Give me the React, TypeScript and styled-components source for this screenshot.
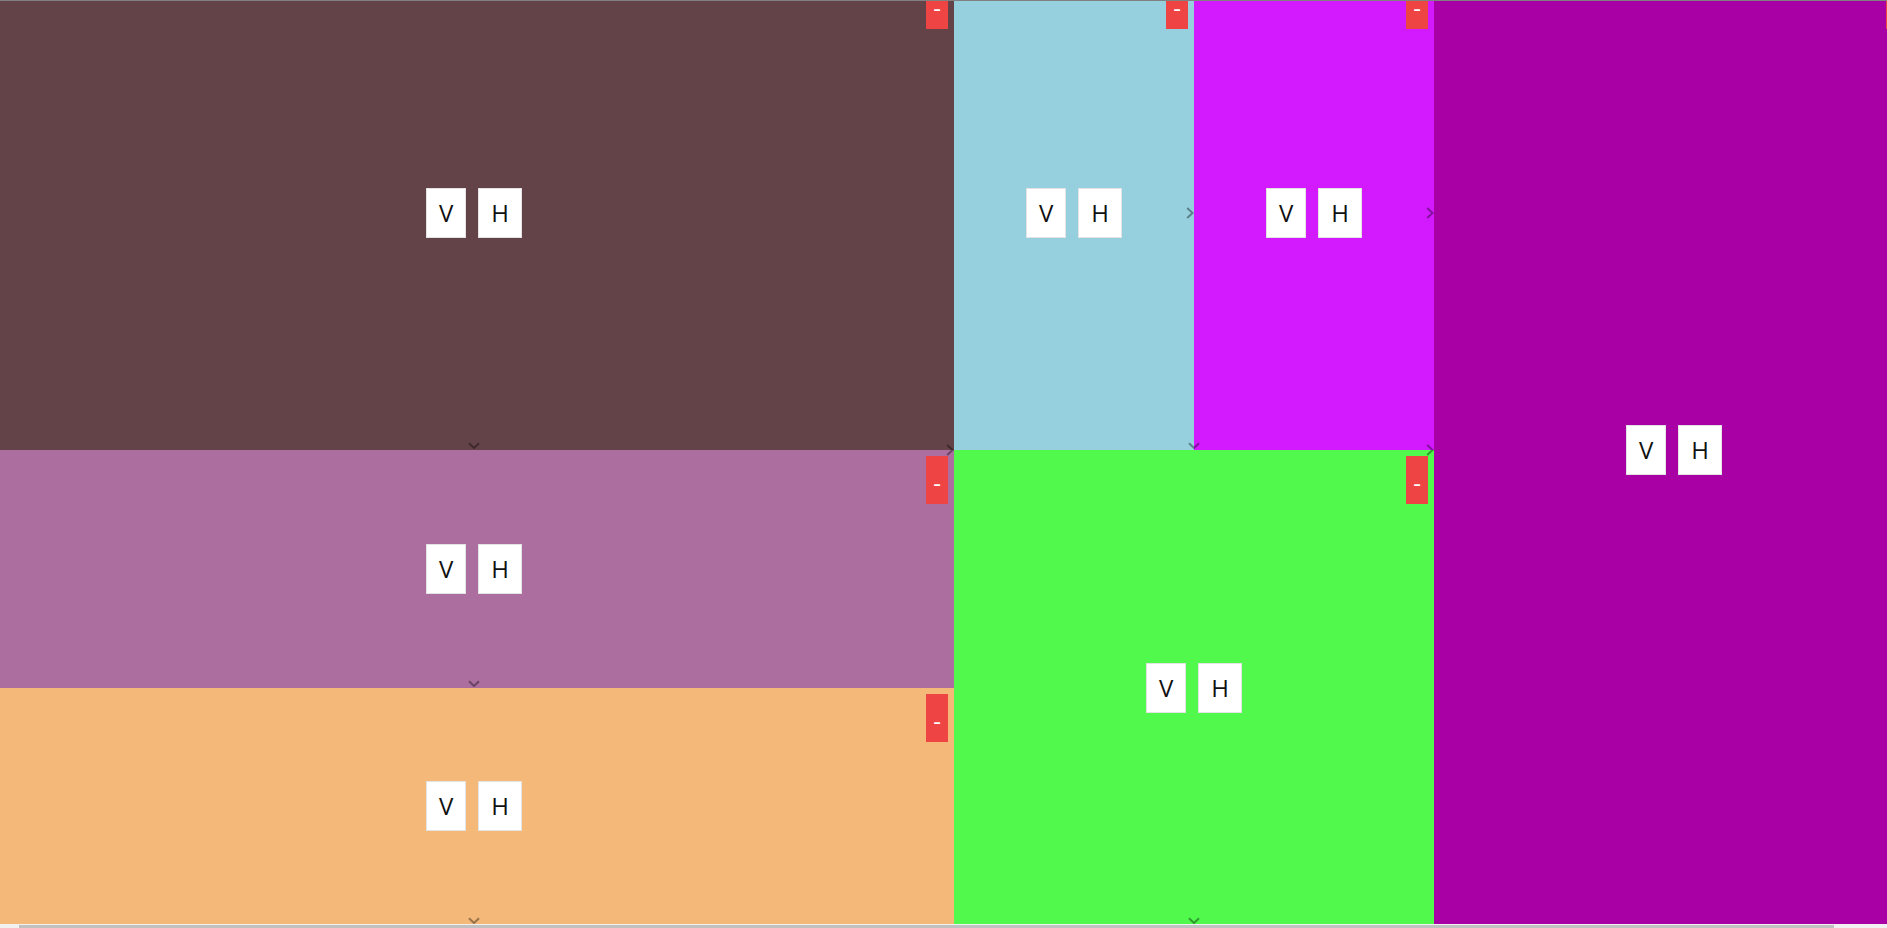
import React, { useLayoutEffect, useRef } from "react";
import styled, { createGlobalStyle } from "styled-components";

const GlobalStyle = createGlobalStyle`
  html, body {
    margin: 0;
    padding: 0;
    overflow: hidden;
    background: #ffffff;
    font-family: "Open Sans", "Noto Sans", sans-serif;
  }
`;

type Dir = "row" | "column";

interface PaneNode {
  id: string;
  size: number;
  dir?: Dir;
  color?: string;
  children?: PaneNode[];
}

const tree: PaneNode = {
  id: "root",
  size: 100,
  dir: "row",
  children: [
    {
      id: "left",
      size: 50,
      dir: "column",
      children: [
        { id: "a", size: 50, color: "#644348" },
        { id: "b", size: 25, color: "#ab6e9e" },
        { id: "c", size: 25, color: "#f4b878" },
      ],
    },
    {
      id: "middle",
      size: 25,
      dir: "column",
      children: [
        {
          id: "mtop",
          size: 50,
          dir: "row",
          children: [
            { id: "d", size: 50, color: "#96d0df" },
            { id: "e", size: 50, color: "#d31aff" },
          ],
        },
        { id: "f", size: 50, color: "#50f94c" },
      ],
    },
    { id: "g", size: 25, color: "#a900a6" },
  ],
};

const Page = styled.div`
  display: flex;
  flex-direction: column;
  width: 100vw;
  height: 928px;
  border-top: 1px solid #808080;
  box-sizing: border-box;
`;

const Viewport = styled.div`
  flex: 0 0 923px;
  overflow: hidden;
`;

const ScrollTrack = styled.div`
  flex: 0 0 4px;
  display: flex;
  background: #f1f1f1;
  padding-left: 19px;
`;

const ScrollThumb = styled.div`
  width: 1815px;
  height: 3px;
  margin-top: 1px;
  background: #c1c1c1;
`;

const Canvas = styled.div`
  width: 1920px;
  height: 950px;
  display: flex;
`;

const Split = styled.div<{ $dir: Dir; $size: number }>`
  position: relative;
  display: flex;
  flex-direction: ${(p) => p.$dir};
  flex: 0 0 ${(p) => p.$size}%;
  min-width: 0;
  min-height: 0;
`;

const Leaf = styled.div<{ $bg: string; $size: number }>`
  position: relative;
  flex: 0 0 ${(p) => p.$size}%;
  min-width: 0;
  min-height: 0;
  background: ${(p) => p.$bg};
  display: flex;
  align-items: center;
  justify-content: center;
  gap: 12px;
`;

const SplitButton = styled.button`
  font-family: "Open Sans", "Noto Sans", sans-serif;
  font-size: 24px;
  line-height: 32px;
  padding: 8px 12px;
  margin: 0;
  color: #111111;
  background: #ffffff;
  border: 1px solid #e3e3e3;
  border-radius: 0;
  cursor: pointer;
`;

const RemoveButton = styled.button`
  position: absolute;
  top: 6px;
  right: 6px;
  width: 22px;
  height: 48px;
  padding: 6px 0 0;
  margin: 0;
  border: none;
  border-radius: 0;
  background: #ef4444;
  color: #ffffff;
  font-family: "Open Sans", "Noto Sans", sans-serif;
  font-size: 24px;
  line-height: 32px;
  display: flex;
  align-items: center;
  justify-content: center;
  cursor: pointer;
  z-index: 2;
`;

const RightHandle = styled.svg`
  position: absolute;
  right: 0;
  top: 50%;
  transform: translateY(-50%);
  width: 8px;
  height: 12px;
  z-index: 1;
`;

const DownHandle = styled.svg`
  position: absolute;
  bottom: 1px;
  left: 50%;
  transform: translateX(-50%);
  width: 12px;
  height: 7px;
  z-index: 1;
`;

const handleStroke = "rgba(0,0,0,0.38)";

function ChevronRight() {
  return (
    <RightHandle viewBox="0 0 8 12">
      <polyline
        points="1.2,1 6.6,6 1.2,11"
        fill="none"
        stroke={handleStroke}
        strokeWidth={2}
      />
    </RightHandle>
  );
}

function ChevronDown() {
  return (
    <DownHandle viewBox="0 0 12 7">
      <polyline
        points="1,1.2 6,6 11,1.2"
        fill="none"
        stroke={handleStroke}
        strokeWidth={2}
      />
    </DownHandle>
  );
}

function Pane({ node, parentDir }: { node: PaneNode; parentDir?: Dir }) {
  const overlays = (
    <>
      {parentDir === "row" && <ChevronRight />}
      {parentDir === "column" && <ChevronDown />}
      {parentDir && <RemoveButton>-</RemoveButton>}
    </>
  );

  if (node.children && node.dir) {
    return (
      <Split $dir={node.dir} $size={node.size}>
        {node.children.map((c) => (
          <Pane key={c.id} node={c} parentDir={node.dir} />
        ))}
        {overlays}
      </Split>
    );
  }

  return (
    <Leaf $bg={node.color || "#ccc"} $size={node.size}>
      <SplitButton>V</SplitButton>
      <SplitButton>H</SplitButton>
      {overlays}
    </Leaf>
  );
}

export default function App() {
  const ref = useRef<HTMLDivElement>(null);

  useLayoutEffect(() => {
    if (ref.current) {
      ref.current.scrollLeft = 6;
      ref.current.scrollTop = 26;
    }
  }, []);

  return (
    <>
      <GlobalStyle />
      <Page>
        <Viewport ref={ref}>
          <Canvas>
            <Pane node={tree} />
          </Canvas>
        </Viewport>
        <ScrollTrack>
          <ScrollThumb />
        </ScrollTrack>
      </Page>
    </>
  );
}
